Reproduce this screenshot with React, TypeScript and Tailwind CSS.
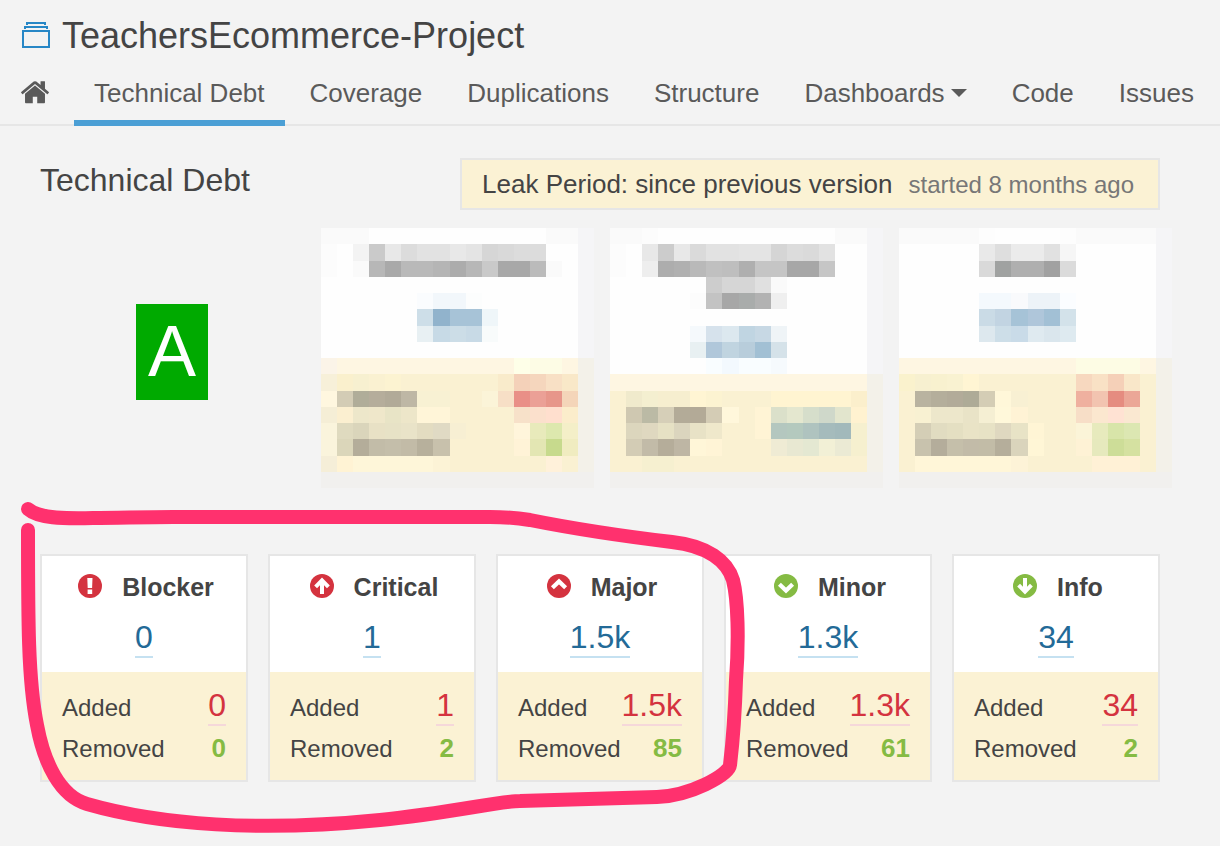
type Run = [row: number, col: number, colours: string];

type Mosaic = { split: number; runs: Run[] };

// Each run lists the colours of neighbouring blocks, left to right.
const MOSAICS: Mosaic[] = [
  {
    split: 8,
    runs: [
      [0, 0, "fafafa fafafa fafafa"],
      [0, 14, "fafafa fafafa"],
      [1, 0, "fcfcfc"],
      [1, 2, "f3f3f3 cacaca e8e8e8 dcdcdc e2e2e2 e2e2e2 e8e8e8 e4e4e4 d6d6d6 d9d9d9 dcdcdc dcdcdc"],
      [2, 0, "fcfcfc"],
      [2, 2, "fafafa b7b7b7 a9a9a9 b9b9b9 b9b9b9 b5b5b5 acacac b7b7b7 c9c9c9 a8a8a8 a8a8a8 bbbbbb fafafa"],
      [4, 6, "fafcfe f2f7fb f2f7fb fcfdfd"],
      [5, 6, "cddee8 91b3cc a7c3d7 a7c3d7 eff6f9"],
      [6, 6, "e8f0f3 c7dae6 ccdde7 c8dae6 f8fbfb"],
      [8, 0, "fbf4e8"],
      [8, 12, "feffe8 fdfce5 fdfce5"],
      [9, 0, "f7f0d9 faf0cd f7f0d0 faf1d1 fcf3d1"],
      [9, 11, "f9ebcb f4d1b9 f5d6bd f8e0c5 f9e8c8"],
      [10, 0, "fff7df d3ccb5 b0ad99 b5ad9b b1aa98 beb7a5 f8f1d3 f8f1d3"],
      [10, 10, "fbf4d8 f7dfc6 e98f87 eba096 e7968a f4d5b9"],
      [11, 0, "f5eed6 fbefd0 ede7ca efe7ca e8e4c6 ede6c9 fff5d8 fff5d8"],
      [11, 12, "f7e1c9 fbe0cc ffdfce fbedcb"],
      [12, 0, "faf4dc dfdabf dad5bb e8e1c5 e7e2c6 e9e3c8 e3dcc1 e0dac4 f7efd3"],
      [12, 12, "fff5db e8eabb dde8ae f4efc8"],
      [13, 0, "faf4dc dbd6ba b4ad9a c2bca8 c4beaa c2bba7 b7b09c c8c1ac"],
      [13, 12, "fff3d7 e3e6b3 c7da8d f0ecc0"],
      [14, 0, "f5eed8 fff3d4 fef6d9 fef6d9 fef6d9 fef6d9 fef6d9 fcf3d6"],
      [14, 14, "fff1da"],
    ],
  },
  {
    split: 9,
    runs: [
      [0, 0, "fafafa fafafa fcfcfc"],
      [0, 14, "fafafa fafafa"],
      [1, 0, "fcfcfc"],
      [1, 2, "e8e8e8 cccccc e8e8e8 dadada e2e2e2 e2e2e2 e4e4e4 e4e4e4 d5d5d5 dcdcdc dadada e2e2e2"],
      [2, 0, "fcfcfc"],
      [2, 2, "eeeeee adadad b0b0b0 b9b9b9 c0c0c0 bebebe afafaf c5c5c5 c5c5c5 a7a7a7 a7a7a7 c6c6c6"],
      [3, 6, "cdcdcd d6d6d6 d6d6d6 e0e0e0 fafafa"],
      [4, 5, "fcfcfc c3c3c3 a7a7a7 a9acab b2b2b2 efefef"],
      [6, 5, "f5f9fc d6e2ec dce8ef c0d5e2 c7d8e4 eff4f7"],
      [7, 5, "e8f0f2 b0c7da c0d4e0 b8cddb a2c0d4 d5e2e9"],
      [8, 6, "f9fdff f3f9fe f9fdff f9fdff f6fafd"],
      [10, 1, "f0eacc f4efd0 f6eecf f6eecf fff5d3 fcf3d1"],
      [10, 10, "fff4d1 fff4d1 fff4d1 fff4d1 fff4d1 fbefcc"],
      [11, 1, "cfc8b1 bbbaa5 d6cfb8 b3ab98 b3aa97 d4ccb5 fff7db"],
      [11, 9, "fff4d5 dbe0ca e4e7cf d6decb cfd8ca e2e5cd fff2d0"],
      [12, 1, "dcd6bd dfd8c0 e6e1c4 dbd5be e8e2c6 efe8cb"],
      [12, 9, "fff4d5 b4c7bf b4c9be afc3bf a5bbbc a2b9bb f6f0cf"],
      [13, 1, "d3ccb5 c2bba8 b5ad9a beb6a4 fff6d8 fff4d6"],
      [13, 10, "efebd4 e8e8d2 e4e8d2 f2f0d6 ebead4 f6f0cf"],
      [14, 2, "f6f0d0 f6f0d0"],
    ],
  },
  {
    split: 8,
    runs: [
      [0, 0, "fafafa fafafa fafafa fafafa fafafa fdfdfd"],
      [0, 10, "fdfdfd fafafa fafafa fafafa fafafa fafafa"],
      [1, 5, "e9e9e9 dedede ebebeb ebebeb e1e1e1 f6f6f6"],
      [2, 5, "d9d9d9 a0a2a1 afafaf afafaf a1a1a1 dbdbdb"],
      [4, 5, "f4f9fd f4f9fd f9fafc edf3f8 edf3f8 fbfdff"],
      [5, 5, "cadbe6 c2d4e2 a6c3d7 afc6da a2c0d5 d3e2ea"],
      [6, 5, "dde8ee cddee8 c9dbe8 dfeaf0 dae6ed deeaf0"],
      [8, 11, "fdfce4 fdfce4 fdfce4 fdfce4"],
      [9, 0, "faf2cd f7f0d0 f8f1cf f9f2d1 fff5d3"],
      [9, 11, "f7d8bf f9e1c5 f5d0b8 f9e7c9"],
      [10, 1, "b9b3a0 b4ae9b b2ab99 aeab97 d4cdb5 fff7d9 f8f0d3"],
      [10, 11, "efb09f f2c4b0 e58c80 eba797"],
      [11, 1, "f8f1d2 ede7cb ede7cb e9e3c7 f5efd3 fff8da fff3d5"],
      [11, 11, "f7dec7 fbe7cf ffe2d3 fae8d1"],
      [12, 1, "d4ceb6 e1dcc1 e4dfc2 e9e3c6 e7e2c5 dfd8c0 e8e3c6 fff5d5"],
      [12, 11, "fbf4d8 e7eabd d8e5a9 dce7b2"],
      [13, 1, "c8c2ad b4ad9b c5bfaa c2bba8 c2bca7 b5ae9b dad4bc fff6d6"],
      [13, 11, "fef2d5 e6e9bd cddd98 d5e1a1"],
      [14, 1, "fff6d8 fff6d8 fff6d8 fff6d8 fff6d8 fff6d8 fdf3d7"],
      [14, 12, "fff1d6 fff1d6 fff1d6"],
    ],
  },
];

const TABS = ["Technical Debt", "Coverage", "Duplications", "Structure", "Dashboards", "Code", "Issues"];

type Severity = {
  name: string;
  total: string;
  added: string;
  removed: string;
};

const SEVERITIES: Severity[] = [
  { name: "Blocker", total: "0", added: "0", removed: "0" },
  { name: "Critical", total: "1", added: "1", removed: "2" },
  { name: "Major", total: "1.5k", added: "1.5k", removed: "85" },
  { name: "Minor", total: "1.3k", added: "1.3k", removed: "61" },
  { name: "Info", total: "34", added: "34", removed: "2" },
];

function ProjectIcon() {
  return (
    <svg viewBox="0 0 28 26" className="mb-0.5 h-[26px] w-7 shrink-0" fill="none" stroke="#2787c6" strokeWidth="2" aria-hidden="true">
      <path d="M5 3V1h18v2M3 7V5h22v2M1 9h26v16H1z" />
    </svg>
  );
}

function HomeIcon() {
  return (
    <svg viewBox="88 224 1616 1312" className="h-6 w-7" fill="currentColor" aria-hidden="true">
      <path d="M1472 992v480q0 26-19 45t-45 19h-384v-384h-256v384h-384q-26 0-45-19t-19-45v-480q0-1 .5-3t.5-3l575-474 575 474q1 2 1 6zm223-69l-62 74q-8 9-21 11h-3q-13 0-21-7l-692-577-692 577q-12 8-24 7-13-2-21-11l-62-74q-8-10-7-23.5t11-21.5l719-599q32-26 76-26t76 26l244 204v-195q0-14 9-23t23-9h192q14 0 23 9t9 23v408l219 182q10 8 11 21.5t-7 23.5z" />
    </svg>
  );
}

function SeverityIcon({ name }: { name: string }) {
  const low = name === "Minor" || name === "Info";
  return (
    <svg viewBox="0 0 24 24" className="size-6 shrink-0" aria-hidden="true">
      <circle cx="12" cy="12" r="12" fill={low ? "#85bb43" : "#d4333f"} />
      {name === "Blocker" && <path d="M9.3 4h5.2l-.4 10H9.7zM9.6 15.4h4.6V20H9.6z" fill="#fff" />}
      {(name === "Critical" || name === "Info") && (
        <path
          d="M5.6 12.8 12 6.4l6.4 6.4M12 7v13"
          transform={low ? "rotate(180 12 12)" : undefined}
          fill="none"
          stroke="#fff"
          strokeWidth="4"
        />
      )}
      {(name === "Major" || name === "Minor") && (
        <path
          d="M5.4 13.8 12 7.4l6.6 6.4"
          transform={low ? "rotate(180 12 12)" : undefined}
          fill="none"
          stroke="#fff"
          strokeWidth="4.2"
        />
      )}
    </svg>
  );
}

function PixelCard({ split, runs }: Mosaic) {
  return (
    <svg
      viewBox="0 0 16 15"
      preserveAspectRatio="none"
      shapeRendering="crispEdges"
      className="h-[244px] min-w-0 flex-1 overflow-visible"
      aria-hidden="true"
    >
      <rect x="0" y="15" width="17" height="1" fill="#f1f0ee" />
      <rect x="16" y="0" width="1" height={split} fill="#f5f5f7" />
      <rect x="16" y={split} width="1" height={15 - split} fill="#f3f1e9" />
      <rect x="0" y="0" width="16" height={split} fill="#fefefe" />
      <rect x="0" y={split} width="16" height="1" fill="#fef6e2" />
      <rect x="0" y={split + 1} width="16" height={14 - split} fill="#faf1d2" />
      {runs.map(([row, col, colours]) =>
        colours.split(" ").map((colour, i) => (
          <rect key={`${row}-${col + i}`} x={col + i} y={row} width="1" height="1" fill={`#${colour}`} />
        ))
      )}
    </svg>
  );
}

function SeverityCard({ name, total, added, removed }: Severity) {
  return (
    <article className="min-w-0 flex-1 border-2 border-[#e6e6e6] bg-white">
      <div className="flex flex-col items-center pt-[15px] pb-3.5">
        <h3 className="flex items-start gap-5 pl-1 text-[25px] leading-8 font-bold">
          <span className="pt-[3px]">
            <SeverityIcon name={name} />
          </span>
          {name}
        </h3>
        <a href="#" className="mt-4 border-b-2 border-[#c5e1f1] pb-px text-[32px] leading-9 text-[#236a97]">
          {total}
        </a>
      </div>
      <dl className="bg-[#fbf2d4] px-5 pt-[15px] pb-4 text-2xl leading-7">
        <div className="flex items-baseline justify-between">
          <dt>Added</dt>
          <dd>
            <a href="#" className="block border-b-2 border-[#f5d8da] pb-px text-[32px] leading-9 text-[#d4333f]">
              {added}
            </a>
          </dd>
        </div>
        <div className="mt-1.5 flex items-baseline justify-between">
          <dt>Removed</dt>
          <dd className="text-[26px] leading-8 font-bold text-[#85bb43]">{removed}</dd>
        </div>
      </dl>
    </article>
  );
}

export default function App() {
  return (
    <div className="min-h-screen overflow-x-hidden bg-[#f3f3f3] font-['Liberation_Sans',Arial,sans-serif] text-[#444]">
      <header className="border-b-2 border-[#e6e6e6] pt-4">
        <h1 className="flex items-center gap-3 pl-[22px] text-[36px] leading-10">
          <ProjectIcon />
          <a href="#">TeachersEcommerce-Project</a>
        </h1>
        <nav className="-mb-0.5 flex items-start gap-[5px] pl-[21px] text-[26px] leading-8 text-[#5a5a5a]">
          <a href="#" aria-label="Home" className="mr-5 pt-6">
            <HomeIcon />
          </a>
          {TABS.map((tab, i) => (
            <a
              key={tab}
              href="#"
              className={`flex items-center gap-1.5 border-b-6 px-5 pt-[21px] pb-[11px] whitespace-nowrap ${
                i === 0 ? "border-[#4b9fd5]" : "border-transparent"
              }`}
            >
              {tab}
              {tab === "Dashboards" && (
                <svg viewBox="0 0 16 8" className="h-2 w-4" fill="currentColor" aria-hidden="true">
                  <path d="M0 0h16L8 8z" />
                </svg>
              )}
            </a>
          ))}
        </nav>
      </header>

      <main className="pt-8">
        <div className="flex items-start justify-between pr-[60px] pl-10">
          <h2 className="pt-1 text-[32px] leading-9">Technical Debt</h2>
          <p className="flex items-baseline gap-4 border-2 border-[#e6e6e6] bg-[#fbf2d4] py-2 pr-6 pl-5 text-[26px] leading-8">
            Leak Period: since previous version
            <span className="text-2xl leading-7 text-[#777]">started 8 months ago</span>
          </p>
        </div>

        <div className="mt-[18px] flex items-center gap-[17px] pr-16 pl-10">
          <div className="flex w-[264px] shrink-0 justify-center pt-1">
            <a href="#" className="h-24 w-[72px] bg-[#00aa00] text-center text-[72px] leading-[94px] text-white">
              A
            </a>
          </div>
          <div className="flex min-w-0 flex-1 gap-8">
            {MOSAICS.map((mosaic, i) => (
              <PixelCard key={i} {...mosaic} />
            ))}
          </div>
        </div>

        <section className="relative pt-[82px] pb-16">
          <div className="flex gap-5 pr-[60px] pl-10">
            {SEVERITIES.map((severity) => (
              <SeverityCard key={severity.name} {...severity} />
            ))}
          </div>
          {/* hand-drawn marker loop round the first three cards */}
          <svg
            viewBox="0 472 1220 374"
            preserveAspectRatio="none"
            className="pointer-events-none absolute inset-0 h-full w-full"
            fill="none"
            stroke="#ff316e"
            strokeWidth="14"
            strokeLinecap="round"
            strokeLinejoin="round"
            aria-hidden="true"
          >
            <path d="M28 509C38 518 62 519 93 518C120 518 140 517 173 517H490C508 517 517 518 530 520C580 530 630 537 672 542C708 546 727 561 733 580C738 600 739 640 736 680C735 710 733 740 730 765C729 775 690 796 657 797L520 801C500 801 450 813 380 820C260 832 160 825 87 804C60 796 44 763 37 725C28 680 28 620 28 530" />
          </svg>
        </section>
      </main>
    </div>
  );
}
